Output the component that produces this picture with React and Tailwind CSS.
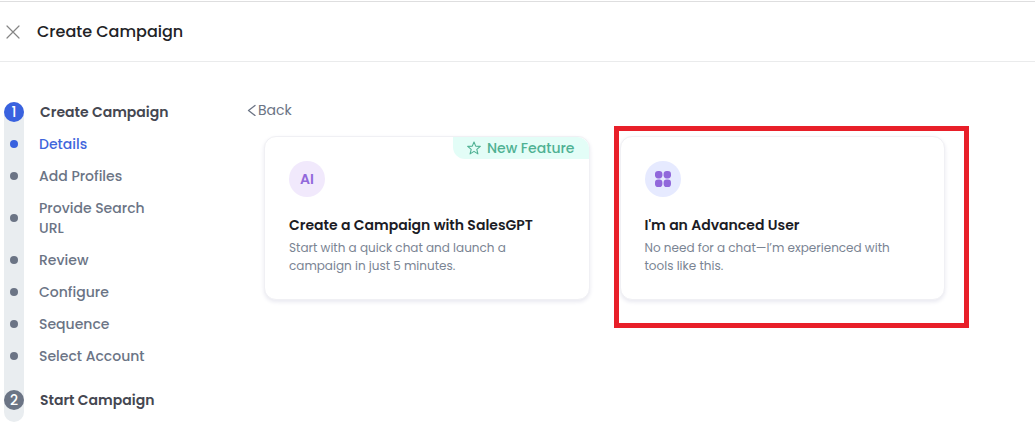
import React from "react";

const steps = [
  { label: "Details", active: true },
  { label: "Add Profiles" },
  { label: "Provide Search URL" },
  { label: "Review" },
  { label: "Configure" },
  { label: "Sequence" },
  { label: "Select Account" },
];

function CloseIcon() {
  return (
    <svg viewBox="0 0 14 14" className="size-3.5" fill="none" stroke="#858585" strokeWidth="1.2" strokeLinecap="round" aria-hidden="true">
      <path d="M1 1 13 13M13 1 1 13" />
    </svg>
  );
}

function BackIcon() {
  return (
    <svg viewBox="0 0 9 12" className="h-3 w-[9px]" fill="none" stroke="currentColor" strokeWidth="1.3" strokeLinecap="round" strokeLinejoin="round" aria-hidden="true">
      <path d="M8 1.5 1.5 6.5 8 11.5" />
    </svg>
  );
}

function StarIcon() {
  return (
    <svg viewBox="0 0 14 14" className="size-3.5" fill="none" stroke="currentColor" strokeWidth="1.1" strokeLinejoin="round" aria-hidden="true">
      <path d="M7 1 8.7 5.1 13.3 5.4 9.8 8.3 10.9 12.9 7 10.4 3.1 12.9 4.2 8.3 .7 5.4 5.3 5.1Z" />
    </svg>
  );
}

function GridIcon() {
  return (
    <svg viewBox="0 0 16 16" className="size-4" fill="#9168db" aria-hidden="true">
      <rect x="0" y="0" width="7.4" height="7.4" rx="3.1" />
      <rect x="8.6" y="0" width="7.4" height="7.4" rx="3.1" />
      <rect x="0" y="8.6" width="7.4" height="7.4" rx="3.1" />
      <rect x="8.6" y="8.6" width="7.4" height="7.4" rx="3.1" />
    </svg>
  );
}

function Stepper() {
  return (
    <nav aria-label="Campaign steps" className="w-[168px] shrink-0 text-sm leading-5">
      <ol>
        <li className="flex gap-4">
          <span className="w-5 rounded-t-full bg-[#e9edf0] pb-1.5">
            <span className="flex size-5 items-center justify-center rounded-full bg-[#3962df] text-sm font-medium text-white">1</span>
          </span>
          <span className="font-semibold text-[#454751]">Create Campaign</span>
        </li>
        {steps.map((step) => (
          <li key={step.label} className="flex gap-[15px]">
            <span className="flex w-5 shrink-0 items-center justify-center bg-[#e9edf0]">
              <span className={step.active ? "size-2 rounded-full bg-[#3962df]" : "size-2 rounded-full bg-[#6b7485]"} />
            </span>
            <a
              href="#"
              aria-current={step.active ? "step" : undefined}
              className={step.active ? "max-w-[120px] py-1.5 font-medium text-[#3f66dc]" : "max-w-[120px] py-1.5 font-medium text-[#6b7485]"}
            >
              {step.label}
            </a>
          </li>
        ))}
        <li className="flex gap-4">
          <span className="w-5 rounded-b-full bg-[#e9edf0] pt-[18px] pb-3">
            <span className="flex size-5 items-center justify-center rounded-full bg-[#6b7485] text-sm font-medium text-white">2</span>
          </span>
          <span className="pt-[18px] font-semibold text-[#454751]">Start Campaign</span>
        </li>
      </ol>
    </nav>
  );
}

function OptionCard({ icon, iconClass, title, text, badge }) {
  return (
    <button
      type="button"
      className="relative flex w-full flex-col items-start rounded-xl border border-[#f0f0f4] bg-white px-6 py-6 text-left shadow-[0_2px_4px_#e8e8f0]"
    >
      {badge && (
        <span className="absolute top-0 right-0 flex h-[22px] items-center gap-1.5 rounded-tr-xl rounded-bl-xl bg-[#e3fdf7] px-3.5 text-sm font-medium text-[#4fb193]">
          <StarIcon />
          {badge}
        </span>
      )}
      <span className={iconClass}>{icon}</span>
      <span className="mt-[18px] text-sm leading-5 font-semibold text-[#1c1c25]">{title}</span>
      <span className="mt-1 text-xs leading-[18px] text-[#7a8493]">{text}</span>
    </button>
  );
}

export default function App() {
  return (
    <div className="min-h-screen bg-white pt-px pb-6 font-['Poppins','Inter',sans-serif]">
      <header className="flex h-[61px] items-center gap-[17px] border-y border-t-[#dededf] border-b-[#eaebec] px-1.5">
        <button type="button" aria-label="Close">
          <CloseIcon />
        </button>
        <h1 className="text-base font-medium text-[#222326]">Create Campaign</h1>
      </header>
      <main className="flex gap-[75px] pt-10 pl-1">
        <Stepper />
        <section className="min-w-0 flex-1 pr-[90px]">
          <button type="button" className="flex items-center gap-0.5 text-sm leading-4 text-[#6b7485]">
            <BackIcon />
            Back
          </button>
          <div className="mt-[18px] ml-[17px] grid max-w-5xl grid-cols-2 gap-[30px]">
            <OptionCard
              badge="New Feature"
              icon="AI"
              iconClass="flex size-9 items-center justify-center rounded-full bg-[#f1e9fc] text-sm font-semibold text-[#9168db]"
              title="Create a Campaign with SalesGPT"
              text="Start with a quick chat and launch a campaign in just 5 minutes."
            />
            <div className="relative">
              <OptionCard
                icon={<GridIcon />}
                iconClass="flex size-9 items-center justify-center rounded-full bg-[#e6eaff]"
                title="I'm an Advanced User"
                text="No need for a chat—I’m experienced with tools like this."
              />
              <div className="pointer-events-none absolute -top-2.5 -right-6 -bottom-7 -left-1.5 border-5 border-[#e81f29]" />
            </div>
          </div>
        </section>
      </main>
    </div>
  );
}
